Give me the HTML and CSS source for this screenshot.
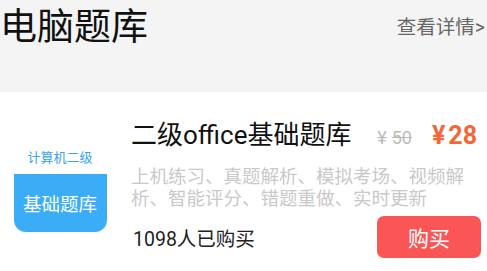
FILE: index.html
```html
<!DOCTYPE html>
<html lang="zh">
<head>
<meta charset="utf-8">
<link rel="stylesheet" href="styles.css">
</head>
<body>
<header class="top">
  <h1 class="top-title">电脑题库</h1>
  <a class="top-more">查看详情&gt;</a>
</header>
<section class="course">
  <div class="cover">
    <div class="cover-label">计算机二级</div>
    <div class="cover-box">基础题库</div>
  </div>
  <div class="info">
    <div class="title-row">
      <h2 class="course-name">二级office基础题库</h2>
      <div class="prices">
        <span class="price-old"><span class="yen">¥</span>50</span>
        <span class="price-new"><span class="yen">¥</span>28</span>
      </div>
    </div>
    <p class="desc">上机练习、真题解析、模拟考场、视频解析、智能评分、错题重做、实时更新</p>
    <div class="buy-row">
      <span class="sold">1098人已购买</span>
      <button class="buy-btn">购买</button>
    </div>
  </div>
</section>
</body>
</html>
```
FILE: styles.css
```css
* { box-sizing: border-box; }
html, body {
  margin: 0;
  padding: 0;
  background: #ffffff;
  font-family: "Roboto", "Noto Sans CJK SC", sans-serif;
  width: 487px;
  height: 271px;
  overflow: hidden;
}
.top {
  height: 92px;
  background: #f4f4f4;
  display: flex;
  justify-content: space-between;
  align-items: flex-start;
  padding: 6px 2px 0 0;
}
.top-title {
  margin: 0;
  font-size: 37px;
  font-weight: 400;
  line-height: 44px;
  color: #111;
}
.top-more {
  font-size: 19.5px;
  line-height: 24px;
  color: #666;
  margin-top: 10px;
}
.course {
  display: flex;
  padding-top: 27px;
}
.cover {
  width: 120px;
  display: flex;
  flex-direction: column;
  align-items: center;
  padding-top: 31px;
}
.cover-label {
  font-size: 13px;
  line-height: 16px;
  color: #3aa3ec;
}
.cover-box {
  margin-top: 8px;
  width: 93px;
  height: 58px;
  background: #3badf7;
  border-radius: 0 0 12px 12px;
  color: #fff;
  font-size: 18.5px;
  display: flex;
  align-items: center;
  justify-content: center;
  padding-bottom: 1px;
}
.info {
  flex: 1;
  margin-left: 11px;
  padding-right: 6px;
}
.title-row {
  display: flex;
  align-items: baseline;
  justify-content: space-between;
}
.course-name {
  margin: 0;
  font-size: 26px;
  font-weight: 400;
  line-height: 32px;
  color: #111;
}
.prices {
  display: flex;
  align-items: baseline;
  gap: 20px;
  padding-right: 4px;
}
.price-old {
  font-size: 18px;
  color: #bbb;
  text-decoration: line-through;
}
.price-old .yen {
  margin-right: 5px;
}
.price-new {
  font-size: 25px;
  font-weight: 700;
  color: #f2683a;
}
.price-new .yen {
  margin-right: 3px;
}
.desc {
  margin: 15px 0 0;
  font-size: 18.5px;
  line-height: 22px;
  color: #c9c9c9;
}
.buy-row {
  display: flex;
  justify-content: space-between;
  align-items: center;
  margin-top: 6px;
}
.sold {
  font-size: 19.5px;
  color: #222;
  margin-left: 2px;
}
.buy-btn {
  width: 104px;
  height: 42px;
  border: none;
  border-radius: 7px;
  background: #fa5656;
  color: #fff;
  font-family: inherit;
  font-size: 21px;
  padding: 0;
}
```
